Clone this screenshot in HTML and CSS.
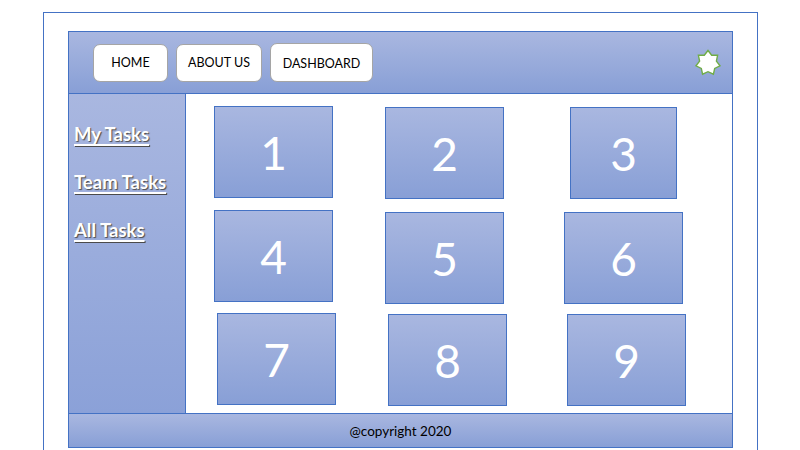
FILE: index.html
```html
<!DOCTYPE html>
<html>
<head>
<meta charset="utf-8">
<link rel="stylesheet" href="styles.css">
</head>
<body>
<div class="frame">
  <div class="app">
    <header class="topbar">
      <nav class="nav">
        <a class="btn btn-home">HOME</a>
        <a class="btn btn-about">ABOUT US</a>
        <a class="btn btn-dash">DASHBOARD</a>
      </nav>
      <svg class="star" width="28" height="28" viewBox="0 0 28 28">
        <polygon points="14,1.5 17.69,6.2 23.6,6.3 22.4,12.1 26,16.8 20.7,19.4 19.4,25.2 14,22.7 8.6,25.2 7.3,19.4 2,16.8 5.6,12.1 4.4,6.3 10.31,6.2" fill="#fff" stroke="#70ad47" stroke-width="1.4" stroke-linejoin="miter"/>
      </svg>
    </header>
    <div class="main">
      <aside class="sidebar">
        <a class="side-link">My Tasks</a>
        <a class="side-link">Team Tasks</a>
        <a class="side-link">All Tasks</a>
      </aside>
      <section class="content">
        <div class="tile t1">1</div>
        <div class="tile t2">2</div>
        <div class="tile t3">3</div>
        <div class="tile t4">4</div>
        <div class="tile t5">5</div>
        <div class="tile t6">6</div>
        <div class="tile t7">7</div>
        <div class="tile t8">8</div>
        <div class="tile t9">9</div>
      </section>
    </div>
    <footer class="footer">@copyright 2020</footer>
  </div>
</div>
</body>
</html>
```

FILE: styles.css
```css
* { box-sizing: border-box; }
html, body { margin: 0; padding: 0; background: #fff; }
body {
  font-family: Lato, "Liberation Sans", sans-serif;
  width: 800px;
  height: 450px;
  overflow: hidden;
}
.frame {
  margin: 12px 0 0 43px;
  width: 715px;
  height: 460px;
  border: 1px solid #4472c4;
  padding: 18px 0 0 24px;
}
.app {
  width: 665px;
  display: flex;
  flex-direction: column;
}
.topbar {
  height: 63px;
  border: 1px solid #4472c4;
  background: linear-gradient(#a9b7e0, #889fd6);
  display: flex;
  align-items: center;
  justify-content: space-between;
  padding: 0 10px 0 24px;
}
.nav {
  display: flex;
  gap: 8px;
  align-items: center;
}
.btn {
  height: 38px;
  background: #fff;
  border: 1px solid #a5a5a5;
  border-radius: 7px;
  display: flex;
  align-items: center;
  justify-content: center;
  font-size: 12.5px;
  color: #000;
}
.btn-home { width: 75px; }
.btn-about { width: 86px; }
.btn-dash { width: 103px; height: 39px; padding-top: 2px; }
.star { display: block; margin-top: 1px; }
.main {
  display: flex;
  height: 319px;
}
.sidebar {
  width: 118px;
  border-left: 1px solid #4472c4;
  border-right: 1px solid #4472c4;
  background: linear-gradient(#a9b7e0, #8ba1d8);
  display: flex;
  flex-direction: column;
  gap: 28px;
  padding: 30px 0 0 5px;
}
.side-link {
  font-size: 18.5px;
  line-height: 20px;
  font-weight: bold;
  color: #fff;
  text-decoration: underline;
  text-decoration-thickness: 2px;
  text-underline-offset: 3px;
  text-shadow: 1px 1px 1px #4a4a4a;
}
.content {
  flex: 1;
  background: #fff;
  border-right: 1px solid #4472c4;
  display: grid;
  grid-template-columns: 171px 179px 1fr;
  grid-auto-rows: 103px;
  padding: 12px 0 0 28px;
  align-items: start;
  justify-items: start;
}
.tile {
  width: 119px;
  height: 92px;
  border: 1px solid #4472c4;
  background: linear-gradient(#a9b7e0, #889fd6);
  color: #fff;
  font-size: 46px;
  display: flex;
  align-items: center;
  justify-content: center;
  padding-top: 1px;
}
.t2 { margin-top: 1px; }
.t3 { margin-top: 1px; margin-left: 6px; width: 107px; }
.t4 { margin-top: 1px; }
.t5 { margin-top: 3px; }
.t6 { margin-top: 3px; }
.t7 { margin-top: 1px; margin-left: 3px; }
.t8 { margin-top: 2px; margin-left: 3px; }
.t9 { margin-top: 2px; margin-left: 3px; }
.footer {
  height: 35px;
  border: 1px solid #4472c4;
  background: linear-gradient(#a9b7e0, #889fd6);
  display: flex;
  align-items: center;
  justify-content: center;
  font-size: 13.5px;
  color: #000;
}
```
